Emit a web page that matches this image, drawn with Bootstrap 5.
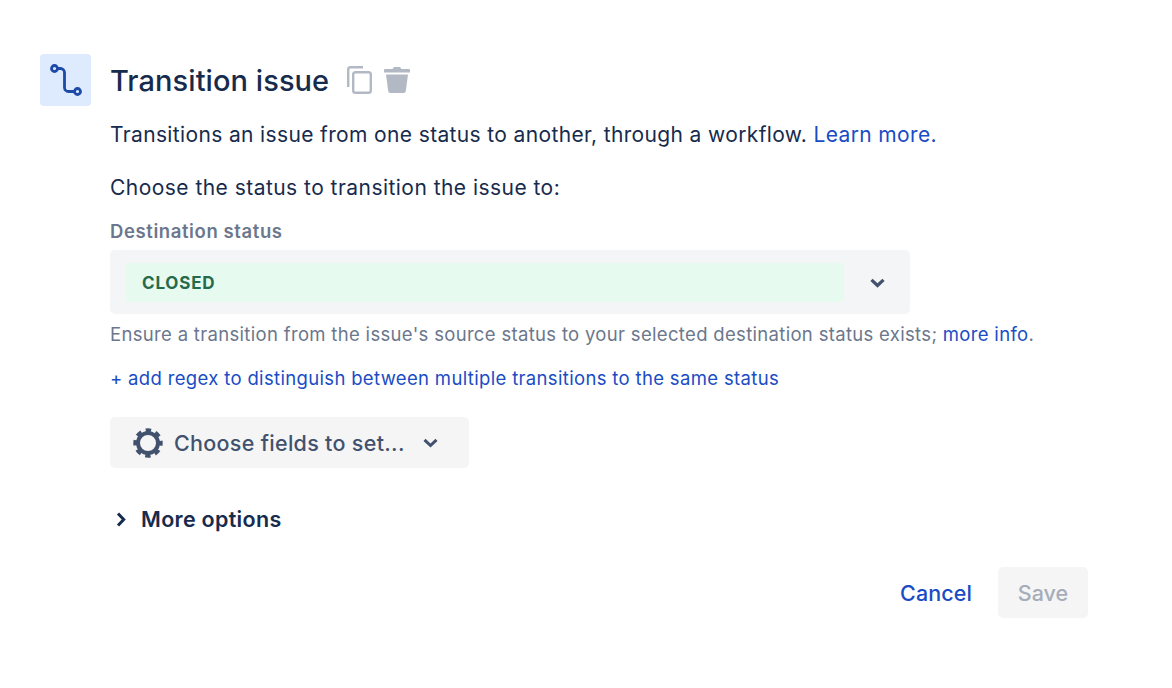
<!DOCTYPE html>
<html lang="en">
<head>
    <title>Transition issue</title>
    <link href="https://cdn.jsdelivr.net/npm/bootstrap@5.3.3/dist/css/bootstrap.min.css" rel="stylesheet">
    <style>
        body {
            font-family: Inter, "Liberation Sans", sans-serif;
            color: #172b4d;
            background: #fff;
            font-size: 21px;
            overflow: hidden;
        }
        a { color: #1a4cc4; text-decoration: none; }
        .rule-wrap { padding: 54px 84px 0 40px; }
        .rule-icon {
            width: 51px;
            height: 52px;
            background: #deebff;
            border-radius: 4px;
            flex: none;
            margin-right: 19px;
        }
        .rule-head { height: 52px; }
        .rule-title {
            font-size: 29px;
            font-weight: 500;
            letter-spacing: 0.07px;
            margin: 2px 18px 0 0;
            line-height: 52px;
        }
        .copy-icon { margin-right: 12px; }
        .line-text { line-height: 28px; margin: 0; letter-spacing: 0.36px; }
        .line-desc { margin-top: 15px; }
        .line-choose { margin-top: 25px; letter-spacing: 0.46px; }
        .field-label {
            color: #6b778c;
            font-size: 18.500px;
            font-weight: 600;
            letter-spacing: 0.6px;
            line-height: 24px;
            margin-top: 17px;
            margin-bottom: 7px;
        }
        .status-select {
            width: 800px;
            height: 64px;
            background: #f4f5f7;
            border-radius: 5px;
            padding: 13px 0 12px 16px;
        }
        .status-value {
            width: 718px;
            height: 39px;
            background: #e7faf0;
            color: #256a4b;
            font-size: 17px;
            font-weight: 700;
            letter-spacing: 0.8px;
            padding-left: 16px;
            line-height: 41px;
        }
        .status-chevron { margin-left: 26px; }
        .help-text {
            color: #6b778c;
            font-size: 18.500px;
            letter-spacing: 0.32px;
            line-height: 24px;
            margin-top: 8px;
        }
        .regex-link {
            display: block;
            font-size: 18.500px;
            letter-spacing: 0.34px;
            line-height: 24px;
            margin-top: 20px;
        }
        .fields-btn {
            width: 359px;
            height: 51px;
            background: #f5f5f6;
            border: 0;
            border-radius: 5px;
            color: #42526e;
            font-size: 21.500px;
            font-weight: 500;
            letter-spacing: 0.3px;
            padding: 0 0 0 23px;
            margin-top: 27px;
        }
        .fields-btn span { padding-top: 2px; }
        .fields-btn svg:first-child { margin-right: 11px; }
        .fields-btn svg:last-child { margin-left: 18px; }
        .more-row {
            font-size: 21.500px;
            font-weight: 600;
            letter-spacing: 0.3px;
            line-height: 28px;
            margin-top: 37px;
        }
        .more-row svg { margin: 0 15px 0 6px; }
        .form-actions { margin-top: 34px; }
        .action-cancel {
            font-size: 21.500px;
            font-weight: 500;
            letter-spacing: 0.1px;
            margin-right: 26px;
            padding-top: 2px;
        }
        .action-save {
            width: 90px;
            height: 51px;
            background: #f5f5f6;
            border: 0;
            border-radius: 5px;
            color: #a5adba;
            font-size: 21.500px;
            font-weight: 500;
            padding: 2px 0 0;
        }
    </style>
</head>
<body>
    <div class="rule-wrap d-flex">
        <div class="rule-icon d-flex align-items-center justify-content-center">
            <svg width="34" height="34" viewBox="0 0 34 34" fill="none" stroke="#1d49a7" stroke-width="2.800">
                <circle cx="5.500" cy="5.500" r="3"/>
                <circle cx="28.500" cy="28.500" r="3"/>
                <path d="M8.500 5.500h3a4 4 0 0 1 4 4v15a4 4 0 0 0 4 4h6"/>
            </svg>
        </div>
        <div class="flex-grow-1">
            <div class="rule-head d-flex align-items-center">
                <h1 class="rule-title">Transition issue</h1>
                <svg class="copy-icon" width="25" height="28" viewBox="0 0 25 28" fill="none" stroke="#b3b9c4" stroke-width="2.400">
                    <path d="M1.200 21V3.500a2.300 2.300 0 0 1 2.300-2.300H16"/>
                    <rect x="6.200" y="6.200" width="17.600" height="20.600" rx="2.300"/>
                </svg>
                <svg width="26" height="26" viewBox="0 0 26 26" fill="#b3b9c4">
                    <path d="M8.500 2 10 0h6l1.500 2H25a1 1 0 0 1 1 1v2.500H0V3a1 1 0 0 1 1-1z"/>
                    <path d="M2 7.500h22l-2.200 16.500a2.300 2.300 0 0 1-2.300 2h-13a2.300 2.300 0 0 1-2.300-2z"/>
                </svg>
            </div>
            <p class="line-text line-desc">Transitions an issue from one status to another, through a workflow. <a href="#">Learn more.</a></p>
            <p class="line-text line-choose">Choose the status to transition the issue to:</p>
            <div class="field-label">Destination status</div>
            <div class="status-select d-flex align-items-center">
                <div class="status-value">CLOSED</div>
                <svg class="status-chevron" width="15" height="10" viewBox="0 0 15 10" fill="none" stroke="#42526e" stroke-width="3.200">
                    <path d="M1.500 1.800 7.500 7.500l6-5.700"/>
                </svg>
            </div>
            <div class="help-text">Ensure a transition from the issue's source status to your selected destination status exists; <a href="#">more info</a>.</div>
            <a class="regex-link" href="#">+ add regex to distinguish between multiple transitions to the same status</a>
            <button type="button" class="fields-btn d-flex align-items-center">
                <svg width="30" height="30" viewBox="0 0 30 30" fill="none" stroke="#42526e">
                    <circle cx="15" cy="15" r="10" stroke-width="4"/>
                    <circle cx="15" cy="15" r="12.800" stroke-width="3.800" stroke-dasharray="5.400 4.653" stroke-dashoffset="2.700"/>
                </svg>
                <span>Choose fields to set...</span>
                <svg width="15" height="10" viewBox="0 0 15 10" fill="none" stroke="#42526e" stroke-width="3">
                    <path d="M1.500 1.800 7.500 7.500l6-5.700"/>
                </svg>
            </button>
            <div class="more-row d-flex align-items-center">
                <svg width="10" height="15" viewBox="0 0 10 15" fill="none" stroke="#172b4d" stroke-width="3">
                    <path d="M2 1.500 7.700 7.500 2 13.500"/>
                </svg>
                <span>More options</span>
            </div>
            <div class="form-actions d-flex justify-content-end align-items-center">
                <a class="action-cancel" href="#">Cancel</a>
                <button type="button" class="action-save" disabled>Save</button>
            </div>
        </div>
    </div>
    <script src="https://cdn.jsdelivr.net/npm/bootstrap@5.3.3/dist/js/bootstrap.bundle.min.js"></script>
</body>
</html>
